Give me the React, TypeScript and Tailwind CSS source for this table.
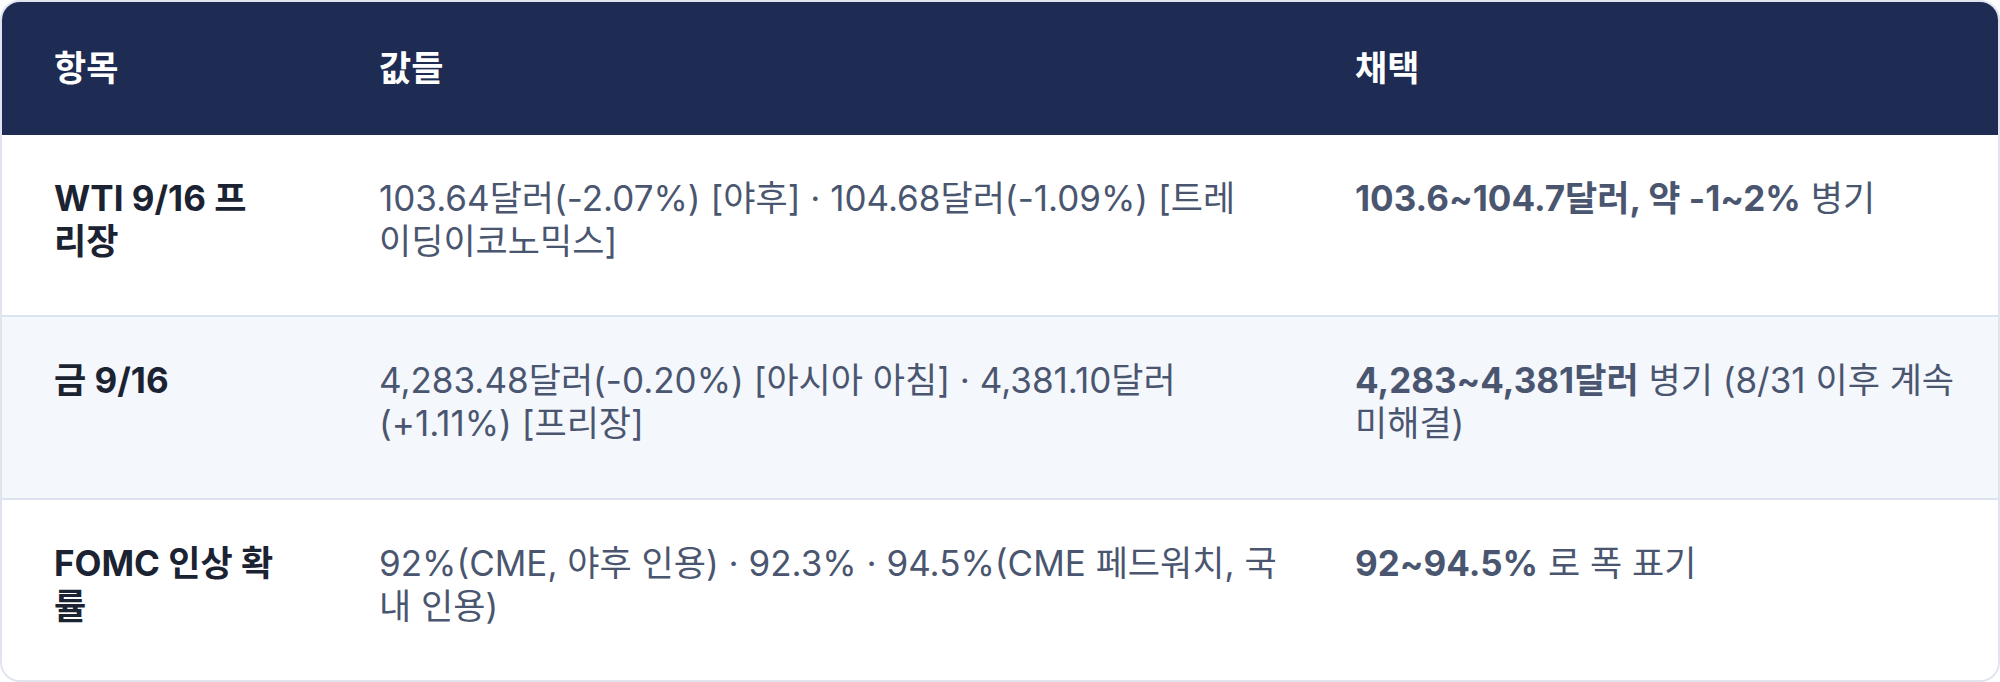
import React from "react";

type Row = {
  item: string;
  values: string;
  strong: string;
  rest: string;
  alt?: boolean;
  valuesPad: string;
  pickPad: string;
};

const rows: Row[] = [
  {
    item: "WTI 9/16 프리장",
    values: "103.64달러(-2.07%) [야후] · 104.68달러(-1.09%) [트레이딩이코노믹스]",
    strong: "103.6~104.7달러, 약 -1~2%",
    rest: " 병기",
    valuesPad: "pr-[52px]",
    pickPad: "pr-[52px]",
  },
  {
    item: "금 9/16",
    values: "4,283.48달러(-0.20%) [아시아 아침] · 4,381.10달러(+1.11%) [프리장]",
    strong: "4,283~4,381달러",
    rest: " 병기 (8/31 이후 계속 미해결)",
    alt: true,
    valuesPad: "pr-[52px]",
    pickPad: "pr-[28px]",
  },
  {
    item: "FOMC 인상 확률",
    values: "92%(CME, 야후 인용) · 92.3% · 94.5%(CME 페드워치, 국내 인용)",
    strong: "92~94.5%",
    rest: " 로 폭 표기",
    valuesPad: "pr-[20px]",
    pickPad: "pr-[52px]",
  },
];

export default function App() {
  return (
    <div
      className="w-[2000px] h-[682px] bg-white"
      style={{ fontFamily: 'Inter, "Noto Sans CJK KR", sans-serif' }}
    >
      <div className="h-full rounded-[20px] border-2 border-[#dfe4ee] overflow-hidden flex flex-col text-[35px] leading-[43px]">
        <div className="grid grid-cols-[325px_976px_1fr] bg-[#1e2b52] text-white font-bold">
          <div className="px-[52px] py-[45px]">항목</div>
          <div className="px-[52px] py-[45px]">값들</div>
          <div className="px-[52px] py-[45px]">채택</div>
        </div>
        {rows.map((r, i) => (
          <div
            key={i}
            className={`grid grid-cols-[325px_976px_1fr] flex-1 ${
              r.alt ? "bg-[#f4f7fc]" : "bg-white"
            } ${i < rows.length - 1 ? "border-b-2 border-[#dde3ee]" : ""}`}
          >
            <div className="px-[52px] pt-[42px] font-bold text-[#1b2333]">{r.item}</div>
            <div className={`pl-[52px] ${r.valuesPad} pt-[42px] text-[#4a5670]`}>{r.values}</div>
            <div className={`pl-[52px] ${r.pickPad} pt-[42px] text-[#4a5670]`}>
              <span className="font-bold">{r.strong}</span>
              {r.rest}
            </div>
          </div>
        ))}
      </div>
    </div>
  );
}
